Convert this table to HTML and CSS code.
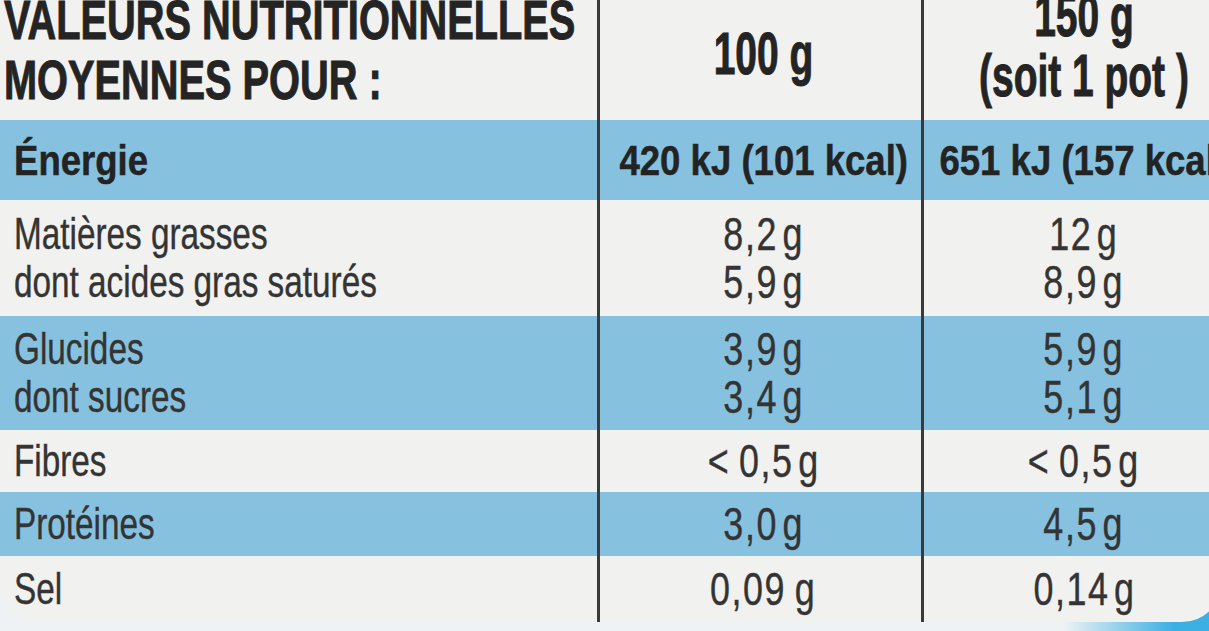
FILE: index.html
```html
<!DOCTYPE html>
<html lang="fr">
<head>
<meta charset="utf-8">
<title>Valeurs nutritionnelles</title>
<link rel="stylesheet" href="styles.css">
</head>
<body>
<div class="sheet">
  <div class="row head">
    <div class="cell name"><span class="t title">VALEURS NUTRITIONNELLES<br>MOYENNES POUR :</span></div>
    <div class="cell val"><span class="t hv one">100 g</span></div>
    <div class="cell val"><span class="t hv two">150 g<br>(soit 1 pot )</span></div>
  </div>
  <div class="row blue energy">
    <div class="cell name"><span class="t bold">Énergie</span></div>
    <div class="cell val"><span class="t bold v">420 kJ (101 kcal)</span></div>
    <div class="cell val"><span class="t bold v">651 kJ (157 kcal)</span></div>
  </div>
  <div class="row fats">
    <div class="cell name"><span class="t reg">Matières grasses<br>dont acides gras saturés</span></div>
    <div class="cell val"><span class="t num">8,2&#8202;g<br>5,9&#8202;g</span></div>
    <div class="cell val"><span class="t num">12&#8202;g<br>8,9&#8202;g</span></div>
  </div>
  <div class="row blue carbs">
    <div class="cell name"><span class="t reg">Glucides<br>dont sucres</span></div>
    <div class="cell val"><span class="t num">3,9&#8202;g<br>3,4&#8202;g</span></div>
    <div class="cell val"><span class="t num">5,9&#8202;g<br>5,1&#8202;g</span></div>
  </div>
  <div class="row fibres">
    <div class="cell name"><span class="t reg">Fibres</span></div>
    <div class="cell val"><span class="t num">&lt;&#8201;0,5&#8202;g</span></div>
    <div class="cell val"><span class="t num">&lt;&#8201;0,5&#8202;g</span></div>
  </div>
  <div class="row blue prot">
    <div class="cell name"><span class="t reg">Protéines</span></div>
    <div class="cell val"><span class="t num">3,0&#8202;g</span></div>
    <div class="cell val"><span class="t num">4,5&#8202;g</span></div>
  </div>
  <div class="row salt">
    <div class="cell name"><span class="t reg">Sel</span></div>
    <div class="cell val"><span class="t num">0,09&#8201;g</span></div>
    <div class="cell val"><span class="t num">0,14&#8202;g</span></div>
  </div>
</div>
</body>
</html>
```
FILE: styles.css
```css
html, body {
  margin: 0;
  padding: 0;
}
body {
  width: 1209px;
  height: 631px;
  overflow: hidden;
  background: linear-gradient(to right, #eef2f4 0%, #eef2f4 88%, #3db0e3 97%);
  font-family: "Liberation Sans", Arial, sans-serif;
  color: #303030;
}
.sheet {
  width: 1222px;
  height: 622px;
  background: #f1f1ef;
  border-radius: 0 0 40px 40px;
  overflow: hidden;
  display: flex;
  flex-direction: column;
}
.row {
  display: grid;
  grid-template-columns: 600px 324px 1fr;
}
.row.blue {
  background: #86c2df;
}
.head { height: 120px; }
.energy { height: 80px; }
.fats { height: 116px; }
.carbs { height: 114px; }
.fibres { height: 62px; }
.prot { height: 64px; }
.salt { height: 66px; }

.cell {
  display: flex;
  align-items: center;
  min-width: 0;
}
.cell:not(:last-child) {
  border-right: 3px solid #3a3a3a;
}
.cell.name {
  padding-left: 14px;
  justify-content: flex-start;
}
.head .cell.name {
  padding-left: 4px;
}
.cell.val {
  justify-content: center;
  padding-left: 6px;
}
.cell.val:last-child {
  padding-left: 22px;
}

.t {
  display: inline-block;
  white-space: nowrap;
}
.name .t {
  transform-origin: left center;
}
.val .t {
  transform-origin: center center;
  text-align: center;
}

.title {
  font-weight: 700;
  font-size: 56px;
  line-height: 60px;
  color: #242424;
  -webkit-text-stroke: 1px #242424;
  transform: scaleX(0.71);
  align-self: flex-start;
  margin-top: -10px;
}
.hv {
  font-weight: 700;
  font-size: 59px;
  line-height: 60px;
  color: #242424;
  -webkit-text-stroke: 1px #242424;
  transform: scaleX(0.66);
  align-self: flex-start;
}
.hv.one { margin-top: 24px; }
.hv.two { margin-top: -14px; }

.bold {
  font-weight: 700;
  font-size: 43px;
  line-height: 80px;
  color: #232323;
  -webkit-text-stroke: 0.5px #232323;
  transform: scaleX(0.85);
}
.reg {
  font-weight: 400;
  font-size: 45px;
  line-height: 48px;
  color: #343434;
  -webkit-text-stroke: 0.4px #343434;
  transform: scaleX(0.74);
}
.num {
  font-weight: 400;
  font-size: 46px;
  line-height: 48px;
  letter-spacing: 2px;
  color: #343434;
  -webkit-text-stroke: 0.4px #343434;
  transform: scaleX(0.78);
}
```
